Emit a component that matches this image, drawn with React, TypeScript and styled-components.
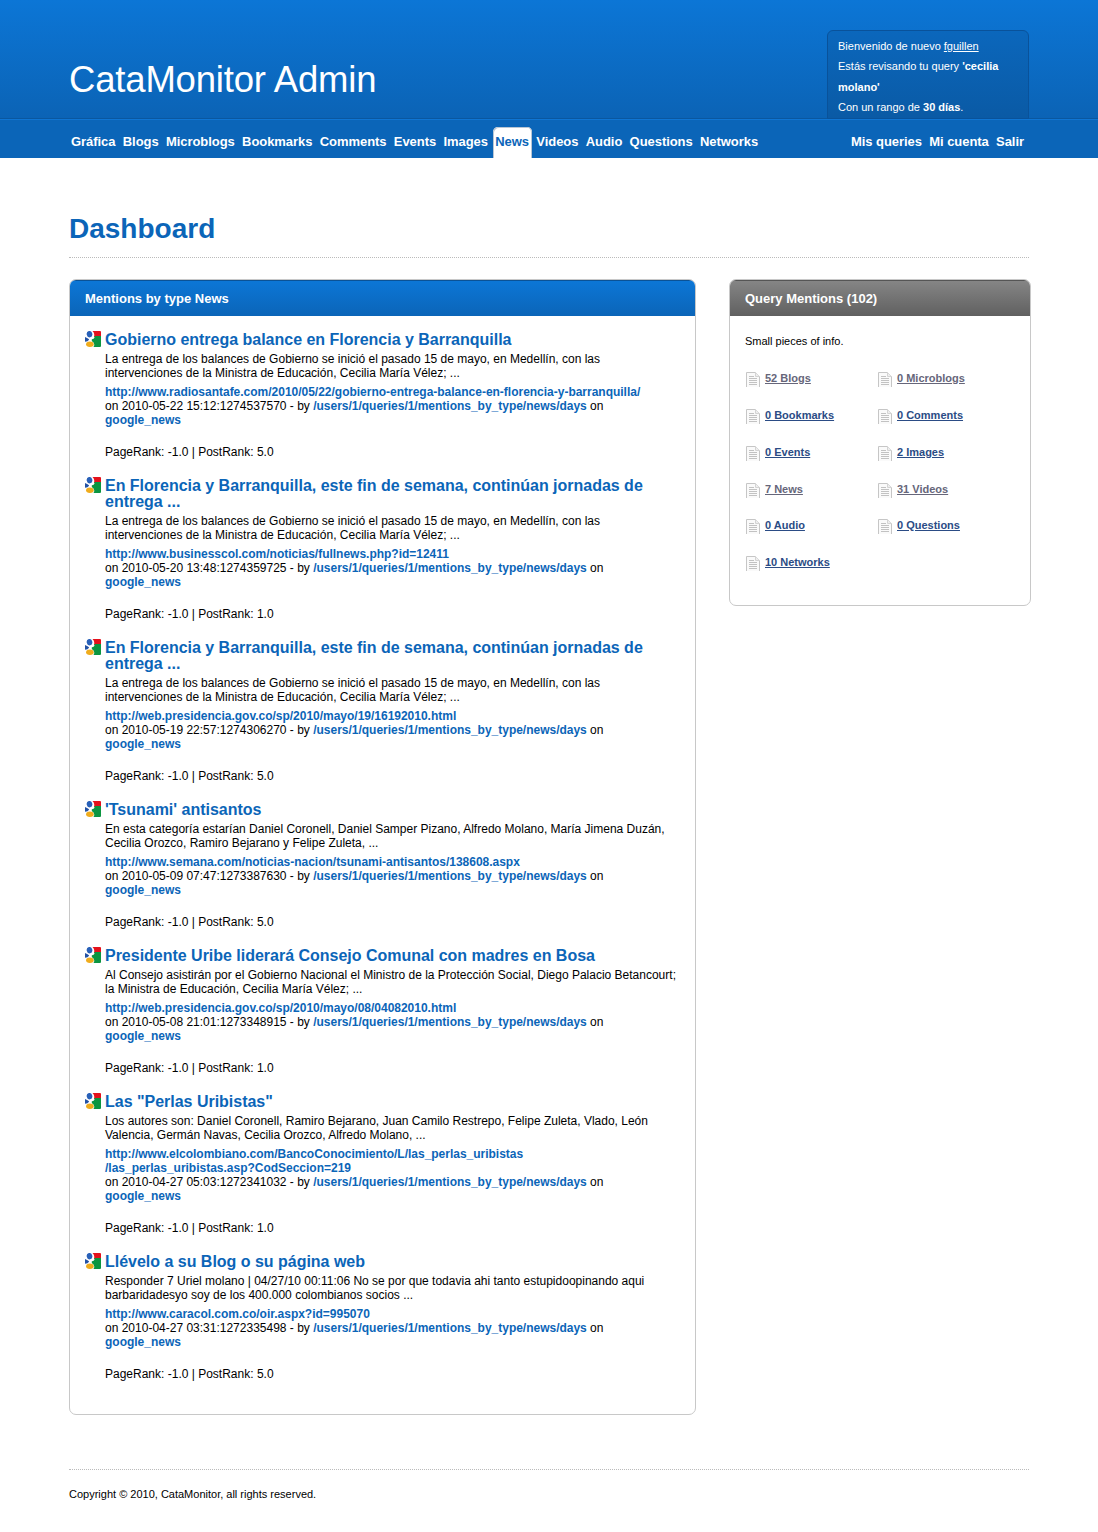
import React from "react";
import styled, { createGlobalStyle } from "styled-components";

const Global = createGlobalStyle`
  * { box-sizing: border-box; }
  body { margin: 0; background: #fff; color: #000; font: 12px/14px "Liberation Sans", Arial, sans-serif; }
  h1, h2, h3, p, ul { margin: 0; padding: 0; }
  a { color: inherit; text-decoration: none; }
`;

const Page = styled.div`
  height: 1532px;
`;
const Header = styled.header`
  height: 158px;
  background: linear-gradient(#0c76d6, #0b63b5 119px, #0b65b8 119px);
`;
const Banner = styled.div`
  height: 120px;
  border-bottom: 1px solid #0f75d3;
  box-shadow: inset 0 -1px 0 #0a579f;
`;
const BannerInner = styled.div`
  width: 960px;
  height: 119px;
  margin-left: 69px;
  display: flex;
  justify-content: space-between;
  align-items: flex-end;
`;
const SiteTitle = styled.h1`
  color: #fff;
  font-size: 36.5px;
  line-height: 44px;
  font-weight: 400;
  letter-spacing: -0.18px;
  padding-bottom: 17px;
  white-space: nowrap;
`;
const Welcome = styled.div`
  width: 202px;
  height: 89px;
  border: 1px solid #09529a;
  border-radius: 6px 6px 0 0;
  background: linear-gradient(#0b67bc, #0a5aa5);
  padding: 5px 10px 0;
  color: #fff;
  font-size: 11px;
  line-height: 20.4px;
  white-space: nowrap;
  a { text-decoration: underline; }
`;
const NavBar = styled.nav`
  width: 960px;
  height: 38px;
  margin-left: 69px;
  padding: 7px 2px 0 0;
  display: flex;
  justify-content: space-between;
`;
const NavGroup = styled.div`
  display: flex;
  gap: 2.3px;
`;
const NavLink = styled.a<{ $active?: boolean }>`
  height: 31px;
  padding: 7px 3px 0 2px;
  border-radius: 5px 5px 0 0;
  font-size: 13px;
  line-height: 15px;
  font-weight: 700;
  letter-spacing: -0.05px;
  white-space: nowrap;
  background: ${(p) => (p.$active ? "#fff" : "transparent")};
  color: ${(p) => (p.$active ? "#0b65b8" : "#fff")};
  box-shadow: ${(p) => (p.$active ? "inset 1px 1px 0 #b9c6d4, inset -1px 0 0 #b9c6d4" : "none")};
`;
const Main = styled.main`
  width: 962px;
  margin-left: 69px;
`;
const Heading = styled.h2`
  height: 100px;
  width: 960px;
  padding-top: 54px;
  border-bottom: 1px dotted #bbb;
  color: #0b65b8;
  font-size: 28px;
  line-height: 34px;
`;
const Columns = styled.div`
  margin-top: 21px;
  display: flex;
  align-items: flex-start;
  justify-content: space-between;
`;
const Panel = styled.section<{ $w: number; $h: number }>`
  width: ${(p) => p.$w}px;
  height: ${(p) => p.$h}px;
  border: 1px solid #c8c8c8;
  border-radius: 7px;
  overflow: hidden;
`;
const PanelTitle = styled.h3<{ $gray?: boolean }>`
  height: 36px;
  padding: 10px 15px 0;
  color: #fff;
  font-size: 13px;
  line-height: 15px;
  border-top: 1px solid ${(p) => (p.$gray ? "#555" : "#0a5296")};
  background: ${(p) => (p.$gray ? "linear-gradient(#858585, #606060)" : "linear-gradient(#0c76d6, #0b65b8)")};
`;
const Mentions = styled.div`
  padding: 15px 0 0 15px;
`;
const Mention = styled.article`
  display: grid;
  grid-template-columns: 16px 1fr;
  column-gap: 4px;
  margin-bottom: 18px;
  white-space: nowrap;
  a { color: #0b65b8; font-weight: 700; letter-spacing: -0.012px; }
`;
const MentionTitle = styled.h3`
  color: #0b65b8;
  font-size: 16px;
  line-height: 16px;
  letter-spacing: -0.015px;
  padding-top: 1px;
  margin-bottom: 4px;
`;
const Excerpt = styled.p`
  margin-bottom: 5px;
`;
const Rank = styled.p`
  margin-top: 18px;
`;
const InfoBody = styled.div`
  padding: 18px 15px;
`;
const Intro = styled.p`
  font-size: 11px;
  line-height: 14px;
`;
const Counts = styled.ul`
  margin-top: 22px;
  list-style: none;
  display: grid;
  grid-template-columns: 132px 1fr;
  grid-template-rows: 37px 37px 37px 36px 37px 37px;
`;
const Count = styled.li<{ $visited: boolean }>`
  display: flex;
  gap: 4px;
  padding-top: 2px;
  a {
    color: ${(p) => (p.$visited ? "#66667a" : "#2b4c85")};
    font-size: 11px;
    line-height: 13px;
    font-weight: 700;
    text-decoration: underline;
  }
`;
const Footer = styled.footer`
  width: 960px;
  margin: 54px 0 0 69px;
  padding-top: 17px;
  border-top: 1px dotted #bbb;
  font-size: 11px;
`;

const GoogleIcon = () => (
  <svg width="16" height="16" viewBox="0 0 16 16">
    <path d="M7.500 0H15q1 0 1 1v5H9Q10 2.500 7.500 0z" fill="#e4111b" />
    <path d="M16 5V15q0 1-1 1H8.500Q10 13.500 8.500 11.500 6 10 6.800 8.300 10 7.800 9.500 5z" fill="#0b9540" />
    <path d="M0 6Q3 7 4.200 8.600 3 10.800 0 10.800z" fill="#2452a4" />
    <ellipse cx="4.500" cy="3.200" rx="2.800" ry="3.200" transform="rotate(-12 4.500 3.200)" fill="#2860b8" />
    <ellipse cx="4.900" cy="13.200" rx="3.800" ry="2.700" fill="#f0ac1c" />
  </svg>
);

const PageIcon = () => (
  <svg width="16" height="16" viewBox="0 0 16 16">
    <path d="M1.500 15V.5h9l4 4V15" fill="#fafafa" stroke="#c6c6c6" />
    <path d="M10.500.5v4h4" fill="#eee" stroke="#d4d4d4" />
    <path d="M4 4.500h5M4 6.500h8M4 8.500h8M4 10.500h8M4 12.500h8" stroke="#c2c2c2" />
  </svg>
);

interface Item {
  title: string[];
  text: string[];
  url: string[];
  date: string;
  rank: string;
}

const balance = [
  "La entrega de los balances de Gobierno se inició el pasado 15 de mayo, en Medellín, con las",
  "intervenciones de la Ministra de Educación, Cecilia María Vélez; ...",
];
const jornadas = ["En Florencia y Barranquilla, este fin de semana, continúan jornadas de", "entrega ..."];

const items: Item[] = [
  {
    title: ["Gobierno entrega balance en Florencia y Barranquilla"],
    text: balance,
    url: ["http://www.radiosantafe.com/2010/05/22/gobierno-entrega-balance-en-florencia-y-barranquilla/"],
    date: "2010-05-22 15:12:1274537570",
    rank: "5.0",
  },
  {
    title: jornadas,
    text: balance,
    url: ["http://www.businesscol.com/noticias/fullnews.php?id=12411"],
    date: "2010-05-20 13:48:1274359725",
    rank: "1.0",
  },
  {
    title: jornadas,
    text: balance,
    url: ["http://web.presidencia.gov.co/sp/2010/mayo/19/16192010.html"],
    date: "2010-05-19 22:57:1274306270",
    rank: "5.0",
  },
  {
    title: ["'Tsunami' antisantos"],
    text: [
      "En esta categoría estarían Daniel Coronell, Daniel Samper Pizano, Alfredo Molano, María Jimena Duzán,",
      "Cecilia Orozco, Ramiro Bejarano y Felipe Zuleta, ...",
    ],
    url: ["http://www.semana.com/noticias-nacion/tsunami-antisantos/138608.aspx"],
    date: "2010-05-09 07:47:1273387630",
    rank: "5.0",
  },
  {
    title: ["Presidente Uribe liderará Consejo Comunal con madres en Bosa"],
    text: [
      "Al Consejo asistirán por el Gobierno Nacional el Ministro de la Protección Social, Diego Palacio Betancourt;",
      "la Ministra de Educación, Cecilia María Vélez; ...",
    ],
    url: ["http://web.presidencia.gov.co/sp/2010/mayo/08/04082010.html"],
    date: "2010-05-08 21:01:1273348915",
    rank: "1.0",
  },
  {
    title: ['Las "Perlas Uribistas"'],
    text: [
      "Los autores son: Daniel Coronell, Ramiro Bejarano, Juan Camilo Restrepo, Felipe Zuleta, Vlado, León",
      "Valencia, Germán Navas, Cecilia Orozco, Alfredo Molano, ...",
    ],
    url: ["http://www.elcolombiano.com/BancoConocimiento/L/las_perlas_uribistas", "/las_perlas_uribistas.asp?CodSeccion=219"],
    date: "2010-04-27 05:03:1272341032",
    rank: "1.0",
  },
  {
    title: ["Llévelo a su Blog o su página web"],
    text: [
      "Responder 7 Uriel molano | 04/27/10 00:11:06 No se por que todavia ahi tanto estupidoopinando aqui",
      "barbaridadesyo soy de los 400.000 colombianos socios ...",
    ],
    url: ["http://www.caracol.com.co/oir.aspx?id=995070"],
    date: "2010-04-27 03:31:1272335498",
    rank: "5.0",
  },
];

const counts: [string, boolean][] = [
  ["52 Blogs", true],
  ["0 Microblogs", true],
  ["0 Bookmarks", false],
  ["0 Comments", false],
  ["0 Events", false],
  ["2 Images", false],
  ["7 News", true],
  ["31 Videos", true],
  ["0 Audio", false],
  ["0 Questions", false],
  ["10 Networks", false],
];

const sections = ["Gráfica", "Blogs", "Microblogs", "Bookmarks", "Comments", "Events", "Images", "News", "Videos", "Audio", "Questions", "Networks"];

const Lines = ({ lines }: { lines: string[] }) => (
  <>
    {lines.map((line, i) => (
      <React.Fragment key={i}>
        {i > 0 && <br />}
        {line}
      </React.Fragment>
    ))}
  </>
);

export default function App() {
  return (
    <Page>
      <Global />
      <Header>
        <Banner>
          <BannerInner>
            <SiteTitle>CataMonitor Admin</SiteTitle>
            <Welcome>
              Bienvenido de nuevo <a href="#">fguillen</a>
              <br />
              Estás revisando tu query <b>'cecilia</b>
              <br />
              <b>molano'</b>
              <br />
              Con un rango de <b>30 días</b>.
            </Welcome>
          </BannerInner>
        </Banner>
        <NavBar>
          <NavGroup>
            {sections.map((s) => (
              <NavLink href="#" key={s} $active={s === "News"}>{s}</NavLink>
            ))}
          </NavGroup>
          <NavGroup>
            {["Mis queries", "Mi cuenta", "Salir"].map((s) => (
              <NavLink href="#" key={s}>{s}</NavLink>
            ))}
          </NavGroup>
        </NavBar>
      </Header>
      <Main>
        <Heading>Dashboard</Heading>
        <Columns>
          <Panel $w={627} $h={1136}>
            <PanelTitle>Mentions by type News</PanelTitle>
            <Mentions>
              {items.map((m) => (
                <Mention key={m.date}>
                  <GoogleIcon />
                  <div>
                    <MentionTitle><Lines lines={m.title} /></MentionTitle>
                    <Excerpt><Lines lines={m.text} /></Excerpt>
                    <p>
                      <a href="#"><Lines lines={m.url} /></a>
                      <br />
                      on {m.date} - by <a href="#">/users/1/queries/1/mentions_by_type/news/days</a> on
                      <br />
                      <a href="#">google_news</a>
                    </p>
                    <Rank>PageRank: -1.0 | PostRank: {m.rank}</Rank>
                  </div>
                </Mention>
              ))}
            </Mentions>
          </Panel>
          <Panel $w={302} $h={327}>
            <PanelTitle $gray>Query Mentions (102)</PanelTitle>
            <InfoBody>
              <Intro>Small pieces of info.</Intro>
              <Counts>
                {counts.map(([label, visited]) => (
                  <Count key={label} $visited={visited}>
                    <PageIcon />
                    <a href="#">{label}</a>
                  </Count>
                ))}
              </Counts>
            </InfoBody>
          </Panel>
        </Columns>
      </Main>
      <Footer>Copyright © 2010, CataMonitor, all rights reserved.</Footer>
    </Page>
  );
}
